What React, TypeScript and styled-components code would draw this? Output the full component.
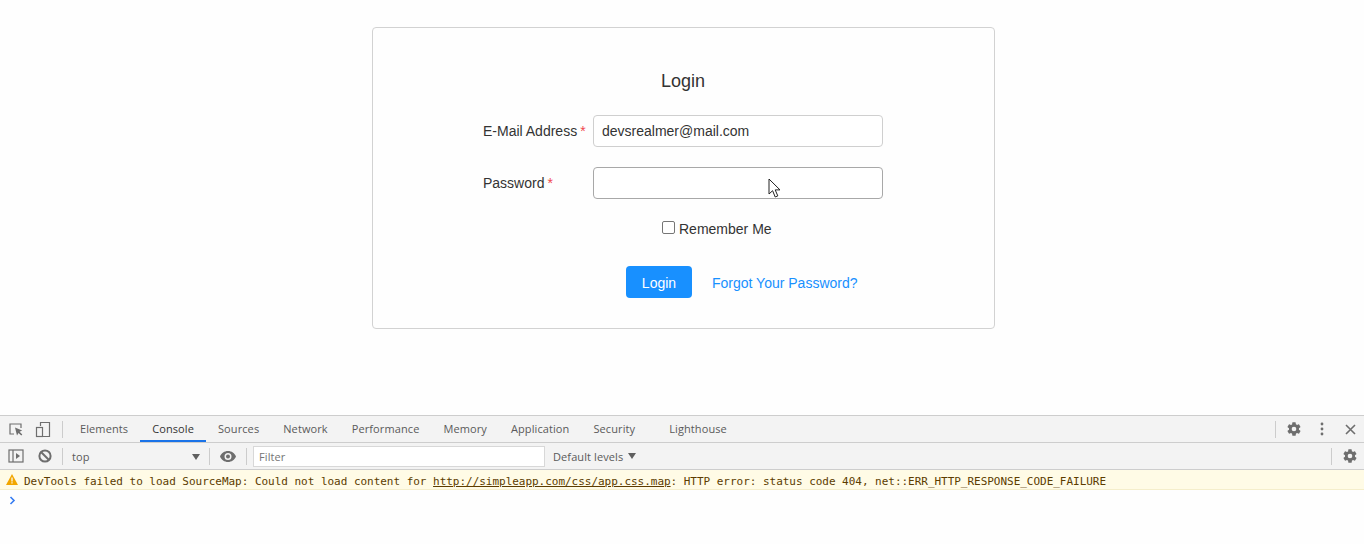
import React from 'react';
import styled, { createGlobalStyle } from 'styled-components';

const GlobalStyle = createGlobalStyle`
  html, body {
    margin: 0;
    padding: 0;
    background: #fefefe;
    overflow: hidden;
  }
`;

const Page = styled.div`
  width: 1364px;
  height: 544px;
  display: flex;
  flex-direction: column;
  font-family: "Liberation Sans", Arial, sans-serif;
`;

const Main = styled.main`
  height: 415px;
  padding: 27px 0 0 372px;
  box-sizing: border-box;
`;

const Card = styled.div`
  width: 623px;
  height: 302px;
  box-sizing: border-box;
  border: 1px solid #d2d2d2;
  border-radius: 4px;
  padding: 42px 0 0 110px;
  display: flex;
  flex-direction: column;
`;

const Title = styled.h2`
  margin: 0 0 23px;
  width: 400px;
  height: 22px;
  line-height: 22px;
  font-size: 18px;
  font-weight: 400;
  text-align: center;
  color: #333;
`;

const Row = styled.div`
  width: 400px;
  display: flex;
  align-items: center;
  margin-bottom: 20px;
`;

const Label = styled.label`
  width: 110px;
  font-size: 14px;
  color: #333;
`;

const Star = styled.span`
  color: #f0474f;
  margin-left: 3px;
`;

const InputWrap = styled.div`
  position: relative;
  width: 290px;
`;

const Input = styled.div<{ $hover?: boolean }>`
  width: 290px;
  height: 32px;
  box-sizing: border-box;
  padding: 0 8px;
  border: 1px solid ${p => (p.$hover ? '#a8a8a8' : '#cfcfcf')};
  border-radius: 4px;
  font-size: 14px;
  line-height: 30px;
  color: #333;
  background: #fff;
`;

const Cursor = styled.svg`
  position: absolute;
  left: 175px;
  top: 11px;
`;

const RememberRow = styled.div`
  display: flex;
  align-items: center;
  height: 20px;
  padding-left: 179px;
  font-size: 14px;
  color: #333;
`;

const Check = styled.span`
  width: 11px;
  height: 11px;
  border: 1px solid #767676;
  border-radius: 2px;
  background: #fff;
  margin-right: 4px;
  margin-top: -3px;
`;

const Actions = styled.div`
  display: flex;
  align-items: center;
  gap: 20px;
  margin-top: 27px;
  padding-left: 143px;
`;

const Button = styled.button`
  width: 66px;
  height: 32px;
  padding: 2px 0 0;
  border: 0;
  border-radius: 4px;
  background: #1890ff;
  color: #fff;
  font-family: inherit;
  font-size: 14px;
`;

const ForgotLink = styled.a`
  padding-top: 2px;
  color: #1890ff;
  font-size: 14px;
  text-decoration: none;
`;

const DevTools = styled.section`
  flex: 1;
  display: flex;
  flex-direction: column;
  background: #fefefe;
  font-family: "Open Sans", "Noto Sans", sans-serif;
  font-size: 11px;
  letter-spacing: 0.1px;
  color: #5a5a5a;
`;

const TabBar = styled.div`
  height: 28px;
  box-sizing: border-box;
  display: flex;
  align-items: center;
  background: #f3f3f3;
  border-top: 1px solid #cdcdcd;
  border-bottom: 1px solid #cdcdcd;
`;

const ToolBar = styled.div`
  height: 27px;
  box-sizing: border-box;
  display: flex;
  align-items: center;
  background: #f3f3f3;
  border-bottom: 1px solid #cdcdcd;
`;

const IconSlot = styled.span<{ $w: number }>`
  width: ${p => p.$w}px;
  display: flex;
  justify-content: center;
  align-items: center;
  flex-shrink: 0;
`;

const Divider = styled.span<{ $gap?: number }>`
  width: 1px;
  height: 17px;
  background: #cccccc;
  flex-shrink: 0;
  margin-right: ${p => p.$gap ?? 0}px;
`;

const Tabs = styled.div`
  display: flex;
  margin-left: 5px;
`;

const Tab = styled.span<{ $active?: boolean; $push?: number }>`
  height: 26px;
  line-height: 26px;
  box-sizing: border-box;
  padding: 0 12px;
  margin-left: ${p => p.$push ?? 0}px;
  flex-shrink: 0;
  color: ${p => (p.$active ? '#333' : '#5a5a5a')};
  border-bottom: ${p => (p.$active ? '2px solid #1a73e8' : '0')};
`;

const Spacer = styled.span`
  flex: 1;
`;

const ContextName = styled.span`
  width: 146px;
  box-sizing: border-box;
  display: flex;
  justify-content: space-between;
  align-items: center;
  padding: 1px 9px 0;
`;

const Caret = styled.span`
  width: 0;
  height: 0;
  border-left: 4px solid transparent;
  border-right: 4px solid transparent;
  border-top: 6px solid #5f5f5f;
`;

const FilterBox = styled.div`
  width: 292px;
  height: 21px;
  box-sizing: border-box;
  margin-left: 6px;
  padding-left: 5px;
  border: 1px solid #d8d8d8;
  background: #fff;
  line-height: 20px;
  color: #757575;
`;

const Levels = styled.span`
  width: 83px;
  display: flex;
  justify-content: space-between;
  align-items: center;
  margin-left: 8px;
`;

const Warning = styled.div`
  height: 20px;
  box-sizing: border-box;
  display: flex;
  align-items: center;
  padding: 3px 0 0 6px;
  background: #fffbe6;
  border-bottom: 1px solid #f5eecb;
  font-family: "DejaVu Sans Mono", monospace;
  font-size: 11px;
  letter-spacing: -0.025px;
  color: #5c3c00;
  white-space: pre;
`;

const WarnIcon = styled.svg`
  margin: -3px 6px 0 0;
`;

const ErrorLink = styled.span`
  text-decoration: underline;
`;

const Prompt = styled.div`
  height: 20px;
  padding-left: 9px;
  display: flex;
  align-items: center;
`;

const Gear = () => (
  <svg width="16" height="16" viewBox="0 0 24 24" fill="#6e6e6e">
    <path
      fillRule="evenodd"
      d="M19.4 13c.05-.33.1-.66.1-1s-.05-.67-.1-1l2.1-1.65c.2-.15.25-.42.12-.64l-2-3.46c-.12-.22-.38-.3-.6-.22l-2.5 1c-.52-.4-1.08-.73-1.7-.98l-.37-2.65A.5.5 0 0 0 14 2h-4a.5.5 0 0 0-.5.42l-.37 2.65c-.62.25-1.18.58-1.7.98l-2.5-1c-.22-.08-.48 0-.6.22l-2 3.46c-.13.22-.08.49.12.64L4.55 11c-.05.33-.1.67-.1 1s.05.67.1 1l-2.1 1.65c-.2.15-.25.42-.12.64l2 3.46c.12.22.38.3.6.22l2.5-1c.52.4 1.08.73 1.7.98l.37 2.65c.05.24.26.42.5.42h4c.24 0 .45-.18.5-.42l.37-2.65c.62-.25 1.18-.58 1.7-.98l2.5 1c.22.08.48 0 .6-.22l2-3.46c.13-.22.08-.49-.12-.64L19.4 13zM12 15.5a3.5 3.5 0 1 1 0-7 3.5 3.5 0 0 1 0 7z"
    />
  </svg>
);

const tabs: { name: string; active?: boolean; push?: number }[] = [
  { name: 'Elements' },
  { name: 'Console', active: true },
  { name: 'Sources' },
  { name: 'Network' },
  { name: 'Performance' },
  { name: 'Memory' },
  { name: 'Application' },
  { name: 'Security' },
  { name: 'Lighthouse', push: 10 },
];

const App: React.FC = () => {
  return (
    <Page>
      <GlobalStyle />
      <Main>
        <Card>
          <Title>Login</Title>
          <Row>
            <Label>
              E-Mail Address<Star>*</Star>
            </Label>
            <InputWrap>
              <Input>devsrealmer@mail.com</Input>
            </InputWrap>
          </Row>
          <Row>
            <Label>
              Password<Star>*</Star>
            </Label>
            <InputWrap>
              <Input $hover />
              <Cursor width="14" height="21" viewBox="0 0 14 21">
                <path d="M1 1v15l3.6-3.3 2.6 6.3 2.6-1.1-2.6-6h4.8z" fill="#fff" stroke="#222" strokeWidth="1" />
              </Cursor>
            </InputWrap>
          </Row>
          <RememberRow>
            <Check />
            Remember Me
          </RememberRow>
          <Actions>
            <Button>Login</Button>
            <ForgotLink>Forgot Your Password?</ForgotLink>
          </Actions>
        </Card>
      </Main>
      <DevTools>
        <TabBar>
          <IconSlot $w={32}>
            <svg width="16" height="16" viewBox="0 0 16 16" fill="none">
              <path d="M6 13H2V3h11v4" stroke="#6e6e6e" strokeWidth="1.2" />
              <path d="M7 6.5l2 8 1.5-2.6 2.8 2.6 1-1-2.7-2.7 2.6-1.4z" fill="#6e6e6e" />
            </svg>
          </IconSlot>
          <IconSlot $w={22}>
            <svg width="16" height="17" viewBox="0 0 16 17" fill="none" stroke="#6e6e6e" strokeWidth="1.2">
              <path d="M5.5 5V1.5h9v14H8" />
              <rect x="1.5" y="6.5" width="6" height="9" />
            </svg>
          </IconSlot>
          <IconSlot $w={8} />
          <Divider />
          <Tabs>
            {tabs.map(t => (
              <Tab key={t.name} $active={t.active} $push={t.push}>
                {t.name}
              </Tab>
            ))}
          </Tabs>
          <Spacer />
          <Divider />
          <IconSlot $w={36}>
            <Gear />
          </IconSlot>
          <IconSlot $w={20}>
            <svg width="4" height="14" viewBox="0 0 4 14" fill="#6e6e6e">
              <circle cx="2" cy="2" r="1.4" />
              <circle cx="2" cy="7" r="1.4" />
              <circle cx="2" cy="12" r="1.4" />
            </svg>
          </IconSlot>
          <IconSlot $w={4} />
          <IconSlot $w={28}>
            <svg width="11" height="11" viewBox="0 0 11 11" stroke="#6e6e6e" strokeWidth="1.6">
              <path d="M1 1l9 9M10 1l-9 9" />
            </svg>
          </IconSlot>
        </TabBar>
        <ToolBar>
          <IconSlot $w={31}>
            <svg width="16" height="14" viewBox="0 0 16 14" fill="none" stroke="#6e6e6e" strokeWidth="1.2">
              <rect x="1" y="1" width="14" height="12" />
              <path d="M5 1v12" />
              <path d="M8 4l4 3-4 3z" fill="#6e6e6e" stroke="none" />
            </svg>
          </IconSlot>
          <IconSlot $w={27}>
            <svg width="14" height="14" viewBox="0 0 14 14" fill="none" stroke="#6e6e6e" strokeWidth="2">
              <circle cx="7" cy="7" r="5.6" />
              <path d="M3 3l8 8" />
            </svg>
          </IconSlot>
          <IconSlot $w={4} />
          <Divider />
          <ContextName>
            top
            <Caret />
          </ContextName>
          <Divider />
          <IconSlot $w={36}>
            <svg width="16" height="11" viewBox="0 0 16 11">
              <path
                fillRule="evenodd"
                d="M8 0C4.4 0 1.4 2.2 0 5.5 1.4 8.8 4.4 11 8 11s6.6-2.2 8-5.5C14.6 2.2 11.6 0 8 0zm0 9a3.5 3.5 0 1 1 0-7 3.5 3.5 0 0 1 0 7zm0-5.5a2 2 0 1 0 0 4 2 2 0 0 0 0-4z"
                fill="#6e6e6e"
              />
            </svg>
          </IconSlot>
          <Divider />
          <FilterBox>Filter</FilterBox>
          <Levels>
            Default levels
            <Caret />
          </Levels>
          <Spacer />
          <Divider $gap={4} />
          <IconSlot $w={28}>
            <Gear />
          </IconSlot>
        </ToolBar>
        <Warning>
          <WarnIcon width="12" height="11" viewBox="0 0 12 11">
            <path d="M6 0l6 11H0z" fill="#f2a600" />
            <path d="M5.4 3.5h1.2v4H5.4zM5.4 8.3h1.2v1.2H5.4z" fill="#fff" />
          </WarnIcon>
          DevTools failed to load SourceMap: Could not load content for <ErrorLink>http://simpleapp.com/css/app.css.map</ErrorLink>: HTTP error: status code 404, net::ERR_HTTP_RESPONSE_CODE_FAILURE
        </Warning>
        <Prompt>
          <svg width="7" height="9" viewBox="0 0 7 9" fill="none" stroke="#367cf1" strokeWidth="1.6">
            <path d="M1.5 1l3.5 3.5L1.5 8" />
          </svg>
        </Prompt>
      </DevTools>
    </Page>
  );
};

export default App;
